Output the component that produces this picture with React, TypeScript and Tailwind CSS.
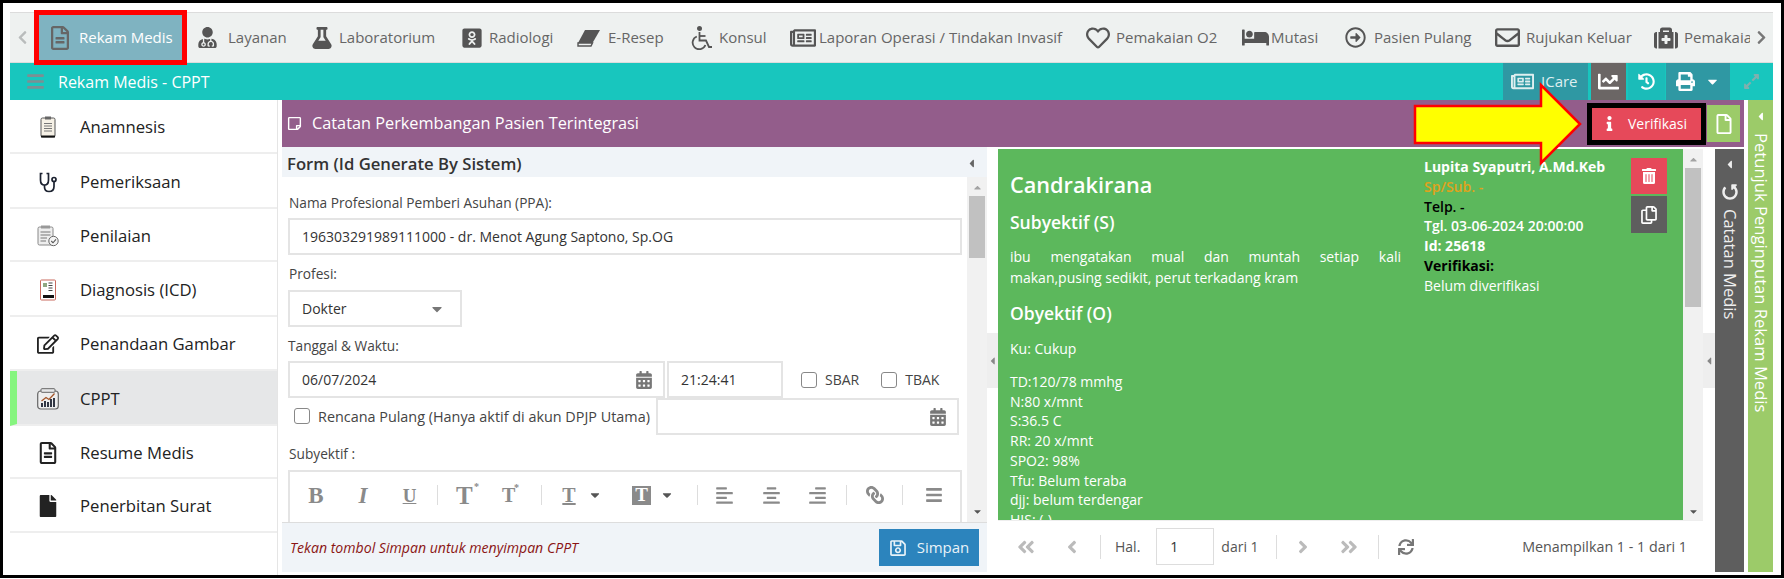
import React from "react";
import {
  FaRegFileAlt, FaUserMd, FaFlask, FaOdnoklassnikiSquare, FaRegNewspaper, FaRegHeart, FaBed,
  FaRegArrowAltCircleRight, FaRegEnvelope, FaMedkit, FaChevronLeft, FaChevronRight, FaChartLine, FaHistory, FaPrint,
  FaExpandAlt, FaInfo, FaRegFile, FaRegStickyNote, FaTrashAlt, FaRegCopy, FaRegSave, FaCalendarAlt, FaSync, FaUndoAlt,
  FaAngleDoubleLeft, FaAngleDoubleRight, FaAngleLeft, FaAngleRight, FaCaretLeft, FaCaretDown, FaCaretUp,
  FaAlignLeft, FaAlignCenter, FaAlignRight, FaLink, FaBars, FaFile, FaRegEdit,
} from "react-icons/fa";

type IconProps = { size?: number; className?: string };

function Eraser({ size = 22, className }: IconProps) {
  return (
    <svg width={size} height={size} viewBox="0 0 24 24" className={className}>
      <path d="M8 4 H23 L15.5 17 H1 Z" fill="currentColor" />
      <path d="M1 17 H15.5 L14 20 H1 Z" fill="none" stroke="currentColor" strokeWidth="1.4" />
    </svg>
  );
}

function Wheelchair({ size = 22, className }: IconProps) {
  return (
    <svg width={size} height={size} viewBox="0 0 24 24" fill="none" stroke="currentColor" strokeWidth="1.8" className={className}>
      <circle cx="10.5" cy="2.6" r="1.6" fill="currentColor" />
      <path d="M10.5 6 V14.5 H17 L20 21 H23" />
      <path d="M10.5 10 H16.5" />
      <path d="M7.8 10.5 A6.6 6.6 0 1 0 16.4 19" />
    </svg>
  );
}

function Clipboard({ size = 22, className }: IconProps) {
  return (
    <svg width={size} height={size} viewBox="0 0 22 22" fill="none" className={className}>
      <rect x="4" y="2" width="14" height="19" rx="1.5" fill="#f6f1e6" stroke="#555" strokeWidth="1" />
      <rect x="8" y="0.5" width="6" height="3" fill="#666" />
      <path d="M7 7.5 H15 M7 10 H15 M7 12.5 H15 M7 15 H15" stroke="#777" strokeWidth="1" />
      <rect x="4" y="19.5" width="14" height="2" fill="#111" />
    </svg>
  );
}

function Stethoscope({ size = 22, className }: IconProps) {
  return (
    <svg width={size} height={size} viewBox="0 0 22 22" fill="none" stroke="#1c2230" strokeWidth="1.7" className={className}>
      <path d="M5.5 2.5 H3.5 V9 C3.5 12.5 5.5 14 7.5 14 C9.5 14 11.5 12.5 11.5 9 V2.5 H9.5" />
      <path d="M7.5 14 V16 C7.5 19 9.5 20.5 12 20.5 C14.5 20.5 17 19 17 15.5 V10.5" />
      <circle cx="17" cy="8.5" r="2" />
    </svg>
  );
}

function ClipboardCheck({ size = 22, className }: IconProps) {
  return (
    <svg width={size} height={size} viewBox="0 0 22 22" fill="none" className={className}>
      <rect x="1" y="2" width="15" height="18" rx="1.5" fill="#eeeeee" stroke="#888" strokeWidth="1" />
      <rect x="4" y="0.5" width="9" height="3" fill="#999" />
      <path d="M3.5 7 H13.5 M3.5 10 H13.5 M3.5 13 H10 M3.5 16 H9" stroke="#777" strokeWidth="1.2" />
      <circle cx="16.5" cy="16" r="4.7" fill="#f4f4f4" stroke="#666" strokeWidth="1" />
      <path d="M14.3 16 L16 17.8 L19 14.4" stroke="#555" strokeWidth="1.1" />
    </svg>
  );
}

function IcdBook({ size = 22, className }: IconProps) {
  return (
    <svg width={size} height={size} viewBox="0 0 22 22" fill="none" className={className}>
      <rect x="3.5" y="1" width="15" height="20" rx="1" fill="#ffffff" stroke="#c96b5f" strokeWidth="1" />
      <path d="M6 5 H10 M6 7 H10" stroke="#6b8c5a" strokeWidth="1.3" />
      <path d="M11.5 4 H15.5 M11.5 6.5 H15.5 M11.5 9 H15.5 M11.5 11.5 H15.5" stroke="#444" strokeWidth="1.2" />
      <rect x="6" y="16" width="11" height="3" fill="#111" />
    </svg>
  );
}

function ChartBox({ size = 22, className }: IconProps) {
  return (
    <svg width={size} height={size} viewBox="0 0 22 22" fill="none" className={className}>
      <rect x="0.7" y="3" width="20.6" height="18" rx="3" fill="#eee" stroke="#666" strokeWidth="1.2" />
      <rect x="4" y="0.7" width="14" height="3.6" rx="1" fill="#e6e7e8" stroke="#666" strokeWidth="1" />
      <path d="M5 19 V15 M8 19 V13 M11 19 V14 M14 19 V11 M17 19 V10" stroke="#1c2230" strokeWidth="1.8" />
      <path d="M4.5 13 L9 9.5 L12 11.5 L17.5 5.5" stroke="#a4562a" strokeWidth="1.3" />
    </svg>
  );
}

const tabs = [
  { l: "Layanan", I: FaUserMd, s: 21, w: 114, b: 31 },
  { l: "Laboratorium", I: FaFlask, s: 22, w: 150, b: 28 },
  { l: "Radiologi", I: FaOdnoklassnikiSquare, s: 22, w: 116, b: 28 },
  { l: "E-Resep", I: Eraser, s: 24, w: 112, b: 31 },
  { l: "Konsul", I: Wheelchair, s: 24, w: 101, b: 30 },
  { l: "Laporan Operasi / Tindakan Invasif", I: FaRegNewspaper, s: 26, w: 296, b: 29 },
  { l: "Pemakaian O2", I: FaRegHeart, s: 24, w: 156, b: 30 },
  { l: "Mutasi", I: FaBed, s: 27, w: 103, b: 29 },
  { l: "Pasien Pulang", I: FaRegArrowAltCircleRight, s: 21, w: 150, b: 29 },
  { l: "Rujukan Keluar", I: FaRegEnvelope, s: 25, w: 159, b: 31 },
  { l: "Pemakaian", I: FaMedkit, s: 24, w: 93, b: 30 },
];

const side = [
  { l: "Anamnesis", I: Clipboard, h: 54, s: 22 },
  { l: "Pemeriksaan", I: Stethoscope, h: 55, s: 22 },
  { l: "Penilaian", I: ClipboardCheck, h: 53, s: 22 },
  { l: "Diagnosis (ICD)", I: IcdBook, h: 55, s: 22 },
  { l: "Penandaan Gambar", I: FaRegEdit, h: 54, s: 22 },
  { l: "CPPT", I: ChartBox, h: 55, s: 22, on: true },
  { l: "Resume Medis", I: FaRegFileAlt, h: 53, s: 22 },
  { l: "Penerbitan Surat", I: FaFile, h: 54, s: 22 },
];

function Field({ className = "", children }: { className?: string; children?: React.ReactNode }) {
  return <div className={`h-[37px] border-2 border-[#e4e4e4] bg-white flex items-center px-[12px] text-[14px] text-[#333] ${className}`}>{children}</div>;
}

function Check({ label, className = "" }: { label: string; className?: string }) {
  return (
    <div className={`flex items-center gap-[8px] font-medium text-[#444] ${className}`}>
      <span className="w-[16px] h-[16px] rounded-[3px] border border-[#888] bg-white shrink-0" />
      {label}
    </div>
  );
}

const Sep = ({ className = "" }: { className?: string }) => <span className={`w-px h-[20px] bg-[#ddd] shrink-0 ${className}`} />;
const serif = { fontFamily: '"Liberation Serif", serif' };

export default function App() {
  return (
    <div className="w-[1784px] h-[578px] border-[3px] border-black bg-white overflow-hidden relative text-[#333]" style={{ fontFamily: '"Open Sans", sans-serif' }}>
      <div className="h-full flex flex-col pl-[7px] pt-[9px]">
        {/* tabs */}
        <div className="h-[51px] shrink-0 w-[1763px] bg-[#eef1f0] border-y border-[#dcdcdc] flex items-center text-[15px] text-[#666]">
          <div className="w-[24px] shrink-0 flex justify-center text-[#b9bcbc]"><FaChevronLeft size={15} /></div>
          <div className="w-[153px] h-[55px] shrink-0 border-[5px] border-[#ff0000] bg-[#7fb3c1] text-white flex items-center pl-[9px] gap-[7px] relative z-10">
            <FaRegFileAlt size={24} className="text-[#666]" />
            Rekam Medis
          </div>
          <div className="flex items-center pl-[10px] min-w-0 flex-1 overflow-hidden">
            {tabs.map((t) => (
              <div key={t.l} className="flex items-center shrink-0 whitespace-nowrap" style={{ width: t.w }}>
                <div className="shrink-0 flex items-center" style={{ width: t.b }}><t.I size={t.s} className="text-[#555]" /></div>
                {t.l}
              </div>
            ))}
          </div>
          <div className="w-[23px] shrink-0 flex justify-center text-[#777]"><FaChevronRight size={15} /></div>
        </div>
        {/* teal */}
        <div className="h-[37px] shrink-0 w-[1763px] bg-[#18c6be] flex items-center text-white text-[16px]">
          <FaBars size={19} className="text-[#7c8f93] ml-[16px] mr-[13px]" />
          Rekam Medis - CPPT
          <div className="ml-auto flex items-center h-full text-white">
            <div className="w-[85px] h-full bg-[#2f98a3] flex items-center gap-[7px] pl-[8px] text-[15px] text-[#dfeff0]"><FaRegNewspaper size={23} />ICare</div>
            <div className="w-[35px] h-full bg-[#6b6665] ml-[3px] flex items-center justify-center"><FaChartLine size={21} /></div>
            <div className="w-[37px] h-full bg-[#1bbcb9] ml-[2px] flex items-center justify-center"><FaHistory size={17} /></div>
            <div className="w-[64px] h-full bg-[#2f98a3] ml-[1px] flex items-center justify-center gap-[10px]"><FaPrint size={19} /><FaCaretDown size={15} /></div>
            <div className="w-[43px] h-full flex items-center justify-center text-[#7fb0ae]"><FaExpandAlt size={17} /></div>
          </div>
        </div>
        {/* body */}
        <div className="flex-1 min-h-0 flex w-[1763px]">
          <aside className="w-[268px] shrink-0 border-r border-[#e5e5e5] text-[16.7px] text-[#222]">
            {side.map((s) => (
              <div key={s.l} className={`flex items-center border-b-2 border-[#eeeeee] pt-[2px] ${s.on ? "bg-[#e6e7e8] border-l-[7px] border-l-[#86f57f] pl-[20px]" : "pl-[27px]"}`} style={{ height: s.h }}>
                <div className="w-[22px] flex justify-center"><s.I size={s.s} className="text-[#222]" /></div>
                <span className="ml-[21px]">{s.l}</span>
              </div>
            ))}
          </aside>
          <div className="w-[4px] shrink-0" />
          <div className="w-[1462px] shrink-0 flex flex-col">
            <div className="h-[47px] shrink-0 bg-[#935d8b] flex items-center text-white text-[16.3px] pl-[5px]">
              <FaRegStickyNote size={15} className="mr-[10px]" />
              Catatan Perkembangan Pasien Terintegrasi
              <div className="ml-auto flex items-center pr-[4px]">
                <div className="w-[119px] h-[42px] border-[5px] border-black bg-[#e6495a] flex items-center pl-[10px] text-[14px] relative z-10"><FaInfo size={15} className="mr-[11px]" />Verifikasi</div>
                <div className="w-[33px] h-[37px] ml-[1px] bg-[#9ccb69] flex items-center justify-center"><FaRegFile size={20} /></div>
              </div>
            </div>
            <div className="flex-1 min-h-0 flex mt-[2px] pb-[3px]">
              {/* form */}
              <div className="w-[705px] shrink-0 flex flex-col bg-[#f0f4f8] -mt-[2px]">
                <div className="h-[30px] shrink-0 flex items-center justify-between pl-[5px] pr-[9px] pt-[3px] text-[16.7px] font-semibold text-[#333]">
                  Form (Id Generate By Sistem)
                  <FaCaretLeft size={13} className="text-[#666]" />
                </div>
                <div className="flex-1 min-h-0 flex">
                  <div className="flex-1 min-w-0 bg-white pl-[6px] overflow-hidden text-[13.7px] text-[#444]">
                    <div className="mt-[16px] h-[20px] leading-[20px] pl-[1px]">Nama Profesional Pemberi Asuhan (PPA):</div>
                    <Field className="mt-[5px] w-[674px]">196303291989111000 - dr. Menot Agung Saptono, Sp.OG</Field>
                    <div className="mt-[9px] h-[20px] leading-[20px] pl-[1px]">Profesi:</div>
                    <Field className="mt-[6px] w-[174px] justify-between">Dokter<FaCaretDown size={16} className="text-[#777] mr-[3px]" /></Field>
                    <div className="mt-[9px] h-[20px] leading-[20px]">Tanggal &amp; Waktu:</div>
                    <div className="flex items-center mt-[5px] h-[37px]">
                      <Field className="w-[377px] justify-between">06/07/2024<FaCalendarAlt size={18} className="text-[#777] -mr-[2px]" /></Field>
                      <Field className="w-[116px] ml-[2px]">21:24:41</Field>
                      <Check label="SBAR" className="ml-[18px] text-[14px]" />
                      <Check label="TBAK" className="ml-[22px] text-[14px]" />
                    </div>
                    <div className="flex items-center h-[37px]">
                      <Check label="Rencana Pulang (Hanya aktif di akun DPJP Utama)" className="ml-[6px] w-[362px] whitespace-nowrap text-[14.4px]" />
                      <Field className="w-[303px] justify-end"><FaCalendarAlt size={18} className="text-[#777] -mr-[2px]" /></Field>
                    </div>
                    <div className="mt-[9px] h-[20px] leading-[20px] pl-[1px]">Subyektif :</div>
                    <div className="mt-[6px] w-[674px] h-[60px] border-2 border-[#e4e4e4] flex items-center text-[#8a8a8a] pl-[18px] pb-[10px]" style={serif}>
                      <span className="w-[16px] text-[23px] leading-none font-bold text-center">B</span>
                      <span className="ml-[31px] w-[16px] text-[23px] leading-none font-bold italic text-center">I</span>
                      <span className="ml-[30px] w-[17px] text-[19px] leading-none font-bold underline text-center">U</span>
                      <Sep className="ml-[19px]" />
                      <span className="ml-[18px] w-[20px] text-[25px] leading-none font-bold relative">T<span className="absolute top-[-1px] right-[-3px] text-[10px]">*</span></span>
                      <span className="ml-[26px] w-[18px] text-[20px] leading-none font-bold relative">T<span className="absolute top-[-2px] right-[1px] text-[10px]">*</span></span>
                      <Sep className="ml-[21px]" />
                      <span className="ml-[20px] w-[14px] text-[20px] leading-none font-bold underline text-center">T</span>
                      <FaCaretDown size={14} className="ml-[12px] text-[#555]" />
                      <span className="ml-[30px] w-[19px] h-[19px] bg-[#8a8a8a] text-white flex items-center justify-center text-[19px] font-bold">T</span>
                      <FaCaretDown size={14} className="ml-[9px] text-[#555]" />
                      <Sep className="ml-[23px]" />
                      <FaAlignLeft size={19} className="ml-[17px]" />
                      <FaAlignCenter size={19} className="ml-[28px]" />
                      <FaAlignRight size={19} className="ml-[27px]" />
                      <Sep className="ml-[19px]" />
                      <FaLink size={18} className="ml-[19px] -scale-x-100" />
                      <Sep className="ml-[18px]" />
                      <FaBars size={18} className="ml-[22px]" />
                    </div>
                  </div>
                  <div className="w-[20px] shrink-0 bg-[#f1f1f1] flex flex-col items-center text-[#a3a3a3]">
                    <FaCaretUp size={11} className="mt-[5px]" />
                    <div className="w-[16px] h-[62px] bg-[#c1c1c1] mt-[3px]" />
                    <FaCaretDown size={11} className="mt-auto mb-[5px] text-[#555]" />
                  </div>
                </div>
                <div className="h-[50px] shrink-0 flex items-center justify-between border-t border-[#ddd] pl-[8px] pr-[8px]">
                  <i className="text-[14.1px] font-medium text-[#8b1414]">Tekan tombol Simpan untuk menyimpan CPPT</i>
                  <div className="w-[100px] h-[37px] bg-[#2c84bd] flex items-center justify-center gap-[10px] text-[15px] text-[#e8f2f8]"><FaRegSave size={18} />Simpan</div>
                </div>
              </div>
              {/* splitter */}
              <div className="w-[11px] shrink-0 flex items-center">
                <div className="w-full h-[55px] bg-[#eeeeee] flex items-center justify-center text-[#888]"><FaCaretLeft size={12} /></div>
              </div>
              {/* right */}
              <div className="w-[705px] shrink-0 flex flex-col">
                <div className="flex-1 min-h-0 flex">
                  <div className="w-[685px] shrink-0 bg-[#5cb85c] text-white overflow-hidden pl-[12px] flex items-start text-[14px]">
                    <div className="w-[391px] shrink-0 font-medium">
                      <div className="mt-[22px] text-[21.7px] font-semibold leading-[28px]">Candrakirana</div>
                      <div className="mt-[12px] text-[17.5px] font-semibold leading-[22px]">Subyektif (S)</div>
                      <div className="mt-[14px] leading-[20.5px]">
                        <div className="[text-align-last:justify]">ibu mengatakan mual dan muntah setiap kali</div>
                        <div>makan,pusing sedikit, perut terkadang kram</div>
                      </div>
                      <div className="mt-[13px] text-[17.5px] font-semibold leading-[24px]">Obyektif (O)</div>
                      <div className="mt-[14px] leading-[20px]">Ku: Cukup</div>
                      <div className="mt-[13px] leading-[19.7px]">
                        <div>TD:120/78 mmhg</div><div>N:80 x/mnt</div><div>S:36.5 C</div><div>RR: 20 x/mnt</div><div>SPO2: 98%</div><div>Tfu: Belum teraba</div><div>djj: belum terdengar</div><div>HIS: (-)</div>
                      </div>
                    </div>
                    <div className="ml-[23px] mt-[8px] w-[207px] shrink-0 leading-[19.8px] font-semibold">
                      <div className="font-bold">Lupita Syaputri, A.Md.Keb</div>
                      <div className="text-[#e0a21b]">Sp/Sub. -</div>
                      <div className="text-black">Telp. -</div>
                      <div>Tgl. 03-06-2024 20:00:00</div>
                      <div className="font-bold">Id: 25618</div>
                      <div className="font-bold text-black">Verifikasi:</div>
                      <div className="font-medium">Belum diverifikasi</div>
                    </div>
                    <div className="mt-[9px] w-[36px] shrink-0 flex flex-col gap-[2px]">
                      <div className="h-[36px] bg-[#e6495a] flex items-center justify-center"><FaTrashAlt size={16} /></div>
                      <div className="h-[37px] bg-[#5e5e5e] flex items-center justify-center"><FaRegCopy size={18} /></div>
                    </div>
                  </div>
                  <div className="w-[20px] shrink-0 bg-[#f1f1f1] flex flex-col items-center text-[#a3a3a3]">
                    <FaCaretUp size={11} className="mt-[5px]" />
                    <div className="w-[16px] h-[139px] bg-[#c1c1c1] mt-[3px]" />
                    <FaCaretDown size={11} className="mt-auto mb-[3px] text-[#555]" />
                  </div>
                </div>
                <div className="h-[52px] shrink-0 bg-white flex items-center text-[14px] text-[#555] border-t border-[#eee]">
                  <FaAngleDoubleLeft size={20} className="ml-[18px] text-[#bbb]" />
                  <FaAngleLeft size={20} className="ml-[26px] text-[#bbb]" />
                  <span className="w-px h-[24px] bg-[#ddd] ml-[18px]" />
                  <span className="ml-[14px]">Hal.</span>
                  <span className="ml-[16px] w-[58px] h-[37px] border border-[#ddd] flex items-center pl-[13px] text-[#333]">1</span>
                  <span className="ml-[7px]">dari 1</span>
                  <span className="w-px h-[24px] bg-[#ddd] ml-[17px]" />
                  <FaAngleRight size={20} className="ml-[16px] text-[#bbb]" />
                  <FaAngleDoubleRight size={20} className="ml-[26px] text-[#bbb]" />
                  <span className="w-px h-[24px] bg-[#ddd] ml-[19px]" />
                  <FaSync size={16} className="ml-[19px] text-[#777]" />
                  <span className="ml-auto mr-[16px] text-[14.3px]">Menampilkan 1 - 1 dari 1</span>
                </div>
              </div>
              {/* splitter */}
              <div className="w-[12px] shrink-0 flex items-center">
                <div className="w-full h-[55px] bg-[#eeeeee] flex items-center justify-center text-[#888]"><FaCaretLeft size={12} /></div>
              </div>
              <div className="w-[29px] shrink-0 bg-[#5e5e5e] text-[#eee] flex flex-col items-center text-[16.5px] pt-[9px]">
                <FaCaretLeft size={13} />
                <FaUndoAlt size={16} className="mt-[13px] rotate-90" />
                <span className="mt-[9px] [writing-mode:vertical-rl] whitespace-nowrap">Catatan Medis</span>
              </div>
            </div>
          </div>
          <div className="w-[4px] shrink-0" />
          <div className="w-[25px] shrink-0 mb-[3px] bg-[#9ccb69] text-white flex flex-col items-center text-[16.6px] pt-[10px]">
            <FaCaretLeft size={13} />
            <span className="mt-[10px] [writing-mode:vertical-rl] whitespace-nowrap">Petunjuk Penginputan Rekam Medis</span>
          </div>
        </div>
      </div>
      {/* annotation arrow */}
      <svg className="absolute left-[1407px] top-[77px] z-20" width="175" height="90" viewBox="0 0 175 90">
        <polygon points="5,26 131,26 131,5 170,44 131,83 131,63 5,63" fill="#ffff00" stroke="#ff0000" strokeWidth="2.5" />
      </svg>
    </div>
  );
}
